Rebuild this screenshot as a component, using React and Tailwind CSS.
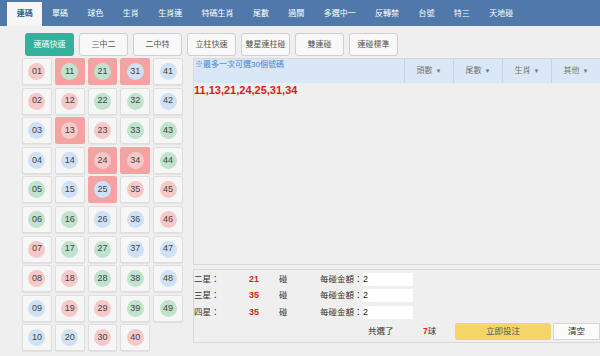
import React from "react";

const navItems = ["連碼", "單碼", "球色", "生肖", "生肖連", "特碼生肖", "尾數", "過關", "多選中一", "反轉禁", "台號", "特三", "天地碰"];
const modes = ["連碼快速", "三中二", "二中特", "立柱快速", "雙星連柱碰", "雙連碰", "連碰標準"];

const red = [1, 2, 7, 8, 12, 13, 18, 19, 23, 24, 29, 30, 34, 35, 40, 45, 46];
const blue = [3, 4, 9, 10, 14, 15, 20, 25, 26, 31, 36, 37, 41, 42, 47, 48];
const picked = [11, 13, 21, 24, 25, 31, 34];

const ballColor = (n) => {
    if (red.includes(n)) return "bg-[#f6c9c9]";
    if (blue.includes(n)) return "bg-[#cfe1f5]";
    return "bg-[#bfe3cc]";
};

const Cell = ({ n }) => {
    const on = picked.includes(n);
    return (
        <div
            className={`h-[27px] flex items-center justify-center rounded-[2px] ${
                on ? "bg-[#f4a3a3]" : "bg-[#f6f6f6] border border-[#dedede] shadow-[0_1px_1px_rgba(0,0,0,0.06)]"
            }`}
        >
            <div className={`w-[17px] h-[17px] rounded-full flex items-center justify-center text-[9px] text-[#444] ${ballColor(n)}`}>
                {String(n).padStart(2, "0")}
            </div>
        </div>
    );
};

const Row = ({ label, count }) => (
    <div className="flex items-center h-[16.5px] text-[8.5px] text-[#333]">
        <span className="w-[55px]">{label}</span>
        <span className="w-[30px] text-[#e02020] font-bold text-[9px]">{count}</span>
        <span className="w-[41px]">碰</span>
        <span className="w-[43px]">每碰金額：</span>
        <div className="w-[50px] h-[13px] bg-white flex items-center text-[9px] text-[#222]">2</div>
    </div>
);

export default function App() {
    const cells = [];
    for (let r = 1; r <= 10; r++) {
        for (let c = 0; c < 5; c++) {
            const n = c * 10 + r;
            cells.push(n <= 49 ? <Cell key={n} n={n} /> : <div key={n} />);
        }
    }

    return (
        <div
            className="w-[600px] h-[356px] bg-[#efefef] overflow-hidden"
            style={{ fontFamily: '"Liberation Sans", "Noto Sans CJK TC", sans-serif' }}
        >
            <div className="h-[26px] bg-[#5079a9] flex items-end pl-[7px]">
                {navItems.map((t, i) => (
                    <div
                        key={t}
                        className={`h-[24px] px-[9.7px] flex items-center text-[8px] ${
                            i === 0 ? "bg-[#f6f6f6] text-[#2d5f95] font-bold" : "text-white"
                        }`}
                    >
                        {t}
                    </div>
                ))}
            </div>

            <div className="flex gap-[5px] pl-[25px] mt-[7px]">
                {modes.map((t, i) => (
                    <div
                        key={t}
                        className={`w-[49px] h-[23px] flex items-center justify-center rounded-[3px] text-[8px] ${
                            i === 0
                                ? "bg-[#35b09c] text-white"
                                : "bg-[#f8f8f8] border border-[#cfcfcf] text-[#555]"
                        }`}
                    >
                        {t}
                    </div>
                ))}
            </div>

            <div className="flex mt-[2px]">
                <div className="ml-[22px] w-[161px] grid grid-cols-5 gap-x-[3px] gap-y-[2.6px]">{cells}</div>

                <div className="ml-[10px] flex-1 flex flex-col">
                    <div className="h-[207px] border border-[#d9d9d9] border-r-0">
                        <div className="h-[24px] bg-[#dae7f6] flex">
                            <div className="flex-1 text-[8px] text-[#3f86d2] pl-[1px] pt-[1px] leading-[10px]">※最多一次可選30個號碼</div>
                            {["頭數", "尾數", "生肖", "其他"].map((t) => (
                                <div key={t} className="w-[49px] border-l border-[#c5d5e9] flex items-center justify-center text-[8px] text-[#777] gap-[3px]">
                                    {t}
                                    <span className="text-[6px]">▼</span>
                                </div>
                            ))}
                        </div>
                        <div className="text-[11px] font-bold text-[#e01818] leading-[14px]">11,13,21,24,25,31,34</div>
                    </div>

                    <div className="mt-[4px] h-[74px] border border-[#d9d9d9] border-r-0 pt-[1px]">
                        <Row label="二星：" count="21" />
                        <Row label="三星：" count="35" />
                        <Row label="四星：" count="35" />
                        <div className="flex items-center h-[19px] mt-[1px] text-[8.5px] text-[#333]">
                            <span className="ml-[174px] w-[55px]">共選了</span>
                            <span className="w-[32px]"><b className="text-[#e02020]">7</b>球</span>
                            <div className="w-[96px] h-[17px] bg-[#f4d568] rounded-[2px] flex items-center justify-center text-[#555]">立即投注</div>
                            <div className="ml-[2px] flex-1 h-[17px] bg-[#fbfbfb] border border-[#d6d6d6] flex items-center justify-center text-[#333]">清空</div>
                        </div>
                    </div>
                </div>
            </div>
        </div>
    );
}
